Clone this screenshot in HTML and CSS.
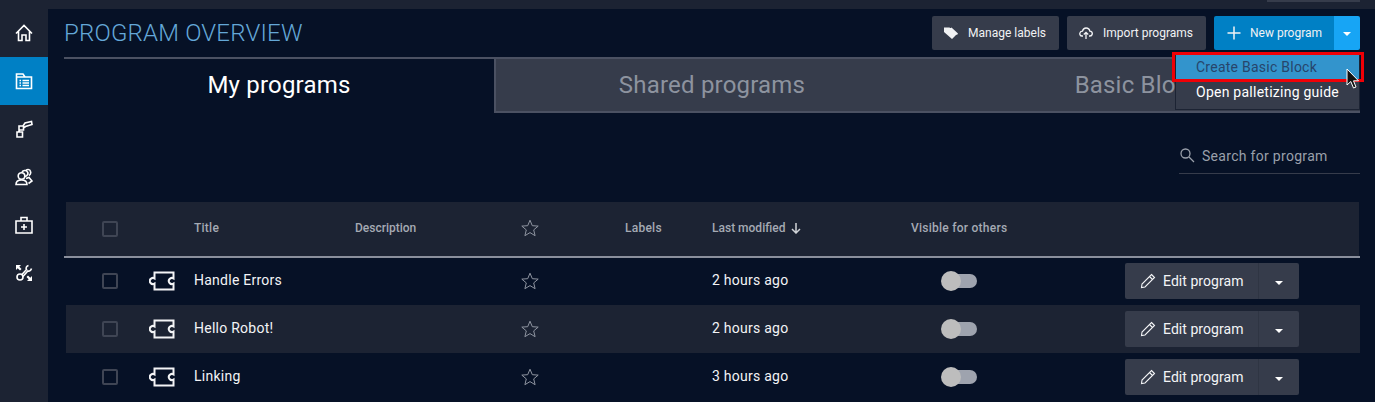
FILE: index.html
```html
<!DOCTYPE html>
<html lang="en">
<head>
<meta charset="utf-8">
<title>Program overview</title>
<link rel="stylesheet" href="styles.css">
</head>
<body>
<div class="topbar"><div class="topbar-tab"></div></div>
<div class="app">
  <nav class="sidebar">
    <a class="nav-item"><svg class="nav-icon" viewBox="0 0 18 18"><path d="M1 9.500 9 1.500 17 9.500M3.500 7.500V16.500H7V11H11V16.500H14.500V7.500"/></svg></a>
    <a class="nav-item active"><svg class="nav-icon" viewBox="0 0 18 18"><path d="M1.500 2H8L10 5H16.500V16.500H1.500ZM1.500 5H10M4.500 8.500H6M7.500 8.500H14M4.500 11H6M7.500 11H14M4.500 13.500H6M7.500 13.500H14"/></svg></a>
    <a class="nav-item"><svg class="nav-icon" viewBox="0 0 18 18"><path d="M2 12H7.500V17H2ZM3.500 12 5 9.500M4 6H8.500V10H4ZM8 6 10 3 16.500 1.500 17 4.500 10.500 6.500 8.500 8"/></svg></a>
    <a class="nav-item"><svg class="nav-icon" viewBox="0 0 18 18"><circle cx="6.500" cy="8" r="3.300"/><path d="M7 4.500C7.500 2.500 11 1.500 12.500 4 13.500 5.500 12.500 8 10 8.500M10.500 3C11.500 1 15 1 15.500 3.500 16 5 15.500 6.500 14 7.500M1 16.500C1 13.500 3.500 12 6.500 12S12 13.500 12 16.500ZM11 10.500 14 9.500 17 13 13.500 15.500"/></svg></a>
    <a class="nav-item"><svg class="nav-icon" viewBox="0 0 18 18"><path d="M1 5H17V17H1ZM6 5V1.500H12V5M9 8V14M6 11H12"/></svg></a>
    <a class="nav-item"><svg class="nav-icon" viewBox="0 0 18 18"><path d="M13.500 1.500C11.500 2 10.500 4 11.500 5.500L6.500 11M16.500 4.500C16 6.500 14.500 7.500 12.800 7L8 12.500"/><path class="solid" d="M1 1H6L4.300 2.700 6.500 5 5 6.500 2.700 4.300 1 6ZM17 17H12L13.700 15.300 11.500 13 13 11.500 15.300 13.700 17 12Z"/><circle cx="5" cy="13" r="3"/></svg></a>
  </nav>
  <main class="main">
    <header class="page-head">
      <h1 class="page-title">PROGRAM OVERVIEW</h1>
      <div class="actions">
        <button class="btn"><svg class="btn-icon" viewBox="0 0 14 14"><path class="solid" d="M0 1.500H5.500L13 8 8 13 0 6ZM7.500 1.500 14 7.500 13 9 6 2.500Z"/></svg>Manage labels</button>
        <button class="btn"><svg class="btn-icon" viewBox="0 0 14 14"><path d="M4 10H3C1 10 .5 8 1 6.800 1.500 5.500 2.500 5.200 3.500 5.200 4 3 5.500 2 7 2S10.500 3 10.800 5.200C12.500 5.200 13.500 6.500 13.300 8 13 9.500 12 10 11 10H10M7 13V6.500M4.800 8.500 7 6.300 9.200 8.500"/></svg>Import programs</button>
        <div class="split">
          <button class="btn primary"><svg class="plus" viewBox="0 0 14 14"><path d="M7 .5V13.500M.5 7H13.500"/></svg>New program</button>
          <button class="btn caret-btn"><span class="caret"></span></button>
        </div>
      </div>
    </header>
    <div class="menu">
      <div class="menu-item selected">Create Basic Block</div>
      <div class="menu-item">Open palletizing guide</div>
    </div>
    <div class="highlight"></div>
    <svg class="cursor" viewBox="0 0 14 24"><path d="M1 1V17L4.800 13.500 7.500 20 10 19 7.500 12.800H12.500Z"/></svg>

    <div class="tabs">
      <div class="tab current">My programs</div>
      <div class="tab">Shared programs</div>
      <div class="tab">Basic Blocks</div>
    </div>

    <div class="search-row">
      <label class="search">
        <svg class="search-icon" viewBox="0 0 16 16"><circle cx="6.500" cy="6.500" r="4.500"/><path d="M10 10 15 15"/></svg>
        <span>Search for program</span>
      </label>
    </div>

    <div class="table">
      <div class="row head">
        <div class="c-select"><span class="check"></span></div>
        <div>Title</div>
        <div class="tight">Description</div>
        <div class="star-cell"><svg class="star" viewBox="0 0 18 18"><path d="M9 1.200 11.300 6.700 17.200 7.100 12.700 10.900 14.100 16.700 9 13.600 3.900 16.700 5.300 10.900 .8 7.100 6.700 6.700Z"/></svg></div>
        <div>Labels</div>
        <div class="sorted tight">Last modified<svg class="arrow" viewBox="0 0 10 12"><path d="M5 1V10.500M1 7 5 11 9 7"/></svg></div>
        <div>Visible for others</div>
        <div></div>
      </div>

      <div class="row">
        <div class="c-select"><span class="check"></span><svg class="block" viewBox="0 0 26 20"><path d="M5.500 1.500H24.500V7.500A3 3 0 1 0 24.500 12.500V18.500H5.500V12.500A3 3 0 1 1 5.500 7.500Z"/></svg></div>
        <div class="cell-text">Handle Errors</div>
        <div></div>
        <div class="star-cell"><svg class="star" viewBox="0 0 18 18"><path d="M9 1.200 11.300 6.700 17.200 7.100 12.700 10.900 14.100 16.700 9 13.600 3.900 16.700 5.300 10.900 .8 7.100 6.700 6.700Z"/></svg></div>
        <div></div>
        <div class="cell-text">2 hours ago</div>
        <div><span class="toggle"><span class="knob"></span></span></div>
        <div class="edit"><button class="edit-btn"><svg class="pencil" viewBox="0 0 16 16"><path d="M11.500 1.500 14.500 4.500 5 14 1.500 14.500 2 11ZM9.500 3.500 12.500 6.500"/></svg>Edit program</button><button class="edit-more"><span class="caret"></span></button></div>
      </div>

      <div class="row alt">
        <div class="c-select"><span class="check"></span><svg class="block" viewBox="0 0 26 20"><path d="M5.500 1.500H24.500V7.500A3 3 0 1 0 24.500 12.500V18.500H5.500V12.500A3 3 0 1 1 5.500 7.500Z"/></svg></div>
        <div class="cell-text">Hello Robot!</div>
        <div></div>
        <div class="star-cell"><svg class="star" viewBox="0 0 18 18"><path d="M9 1.200 11.300 6.700 17.200 7.100 12.700 10.900 14.100 16.700 9 13.600 3.900 16.700 5.300 10.900 .8 7.100 6.700 6.700Z"/></svg></div>
        <div></div>
        <div class="cell-text">2 hours ago</div>
        <div><span class="toggle"><span class="knob"></span></span></div>
        <div class="edit"><button class="edit-btn"><svg class="pencil" viewBox="0 0 16 16"><path d="M11.500 1.500 14.500 4.500 5 14 1.500 14.500 2 11ZM9.500 3.500 12.500 6.500"/></svg>Edit program</button><button class="edit-more"><span class="caret"></span></button></div>
      </div>

      <div class="row">
        <div class="c-select"><span class="check"></span><svg class="block" viewBox="0 0 26 20"><path d="M5.500 1.500H24.500V7.500A3 3 0 1 0 24.500 12.500V18.500H5.500V12.500A3 3 0 1 1 5.500 7.500Z"/></svg></div>
        <div class="cell-text">Linking</div>
        <div></div>
        <div class="star-cell"><svg class="star" viewBox="0 0 18 18"><path d="M9 1.200 11.300 6.700 17.200 7.100 12.700 10.900 14.100 16.700 9 13.600 3.900 16.700 5.300 10.900 .8 7.100 6.700 6.700Z"/></svg></div>
        <div></div>
        <div class="cell-text">3 hours ago</div>
        <div><span class="toggle"><span class="knob"></span></span></div>
        <div class="edit"><button class="edit-btn"><svg class="pencil" viewBox="0 0 16 16"><path d="M11.500 1.500 14.500 4.500 5 14 1.500 14.500 2 11ZM9.500 3.500 12.500 6.500"/></svg>Edit program</button><button class="edit-more"><span class="caret"></span></button></div>
      </div>
    </div>
  </main>
</div>
</body>
</html>
```
FILE: styles.css
```css
* { box-sizing: border-box; }
html, body { margin: 0; height: 402px; overflow: hidden; }
body { background: #061126; color: #fff; font-family: Roboto, "Liberation Sans", sans-serif; font-size: 14px; }
svg { display: block; flex: none; fill: none; stroke: currentColor; }
.solid { fill: currentColor; stroke: none; }
button { font-family: inherit; border: 0; color: inherit; padding: 0; }

.topbar { height: 9px; background: #1c2333; display: flex; justify-content: flex-end; padding-right: 15px; }
.topbar-tab { width: 93px; height: 2px; background: #363c4b; }

.app { display: flex; height: 393px; }
.sidebar { width: 48px; background: #1c2333; flex: none; }
.nav-item { height: 48px; display: flex; align-items: center; justify-content: center; color: #fff; }
.nav-item.active { background: #0080c5; }
.nav-icon { width: 18px; height: 18px; stroke-width: 1.600; }

.main { flex: 1; padding: 7px 15px 0 16px; position: relative; min-width: 0; }
.page-head { display: flex; justify-content: space-between; align-items: center; height: 34px; }
.page-title { margin: 0; font-size: 24px; font-weight: 300; letter-spacing: .2px; color: #64a8d8; }
.actions { display: flex; gap: 8px; }

.btn { height: 34px; display: flex; align-items: center; background: #363c4b; border-radius: 2px; font-size: 12px; padding: 0 13px 0 12px; color: #f1f2f4; white-space: nowrap; }
.btn-icon { width: 14px; height: 14px; margin-right: 10px; stroke-width: 1.300; }
.split { display: flex; }
.primary { background: #0080c5; border-radius: 2px 0 0 2px; padding: 0 0 0 13px; width: 120px; }
.plus { width: 14px; height: 14px; stroke-width: 1.500; margin-right: 9px; }
.caret-btn { width: 26px; padding: 0; justify-content: center; background: #17a5f5; border-radius: 0 2px 2px 0; }
.caret { display: block; width: 0; height: 0; border-left: 4px solid transparent; border-right: 4px solid transparent; border-top: 4px solid #fff; margin-top: 2px; }

.menu { position: absolute; top: 43px; right: 15px; width: 185px; height: 58px; background: #363c4b; border: 1px solid #1c2333; padding-top: 1px; z-index: 3; font-size: 14px; letter-spacing: .25px; }
.menu-item { height: 25px; line-height: 25px; padding-left: 20px; white-space: nowrap; }
.menu-item.selected { height: 26px; line-height: 27px; background: #3394cc; color: #27456b; }
.highlight { position: absolute; top: 43px; right: 11px; width: 192px; height: 30px; border: 3px solid #f00006; z-index: 4; }
.cursor { position: absolute; top: 59px; left: 1298px; width: 14px; height: 24px; fill: #111; stroke: #fff; stroke-width: 1; z-index: 5; }

.tabs { display: grid; grid-template-columns: 432px 432px 432px; height: 56px; margin-top: 7px; border-top: 2px solid #4b5162; }
.tab { background: #363c4b; border-bottom: 2px solid #4b5162; color: #8d939f; font-size: 24px; letter-spacing: .2px; display: flex; align-items: center; justify-content: center; white-space: nowrap; }
.tab.current { background: #061126; color: #fff; border-bottom: 0; border-right: 2px solid #4b5162; padding-bottom: 2px; }

.search-row { display: flex; justify-content: flex-end; margin-top: 26px; }
.search { width: 181px; height: 35px; border-bottom: 1px solid #363c4b; display: flex; align-items: center; color: #9aa0ab; letter-spacing: .3px; }
.search-icon { width: 16px; height: 16px; stroke-width: 1.300; margin-right: 7px; margin-top: -2px; }

.table { margin-top: 28px; }
.row { display: grid; grid-template-columns: 130px 161px 166px 104px 87px 199px 214px 1fr; height: 48px; align-items: center; letter-spacing: .25px; color: #f3f4f6; }
.row.alt { background: #1c2333; margin-left: 2px; grid-template-columns: 128px 161px 166px 104px 87px 199px 214px 1fr; }
.row.alt .c-select { padding-left: 36px; }
.row.head { height: 55px; background: #1c2333; margin-left: 2px; margin-right: 1px; color: #a5aab4; font-size: 12px; font-weight: 500; grid-template-columns: 128px 161px 166px 104px 87px 199px 214px 1fr; position: relative; padding-bottom: 4px; }
.row.head::after { content: ""; position: absolute; left: -2px; right: -1px; bottom: -1px; height: 2px; background: #8a8f9c; }
.row.head .c-select { padding-left: 36px; }
.row.head .check { margin-top: 2px; }
.tight { letter-spacing: 0; }
.cell-text { margin-top: -2px; }
.c-select { display: flex; align-items: center; padding-left: 38px; }
.check { display: block; width: 16px; height: 16px; border: 2px solid #3f4554; border-radius: 2px; flex: none; }
.block { width: 26px; height: 20px; margin-left: 31px; stroke-width: 2; }
.star-cell { color: #8f95a1; }
.star { width: 18px; height: 18px; stroke-width: 1; }
.sorted { display: flex; align-items: center; white-space: nowrap; }
.arrow { width: 10px; height: 12px; margin-left: 6px; stroke-width: 1.500; color: #d0d3d8; }
.toggle { display: block; position: relative; width: 32px; height: 14px; margin-left: 34px; background: #9ea3ae; border-radius: 7px; }
.knob { position: absolute; left: -4px; top: -3px; width: 20px; height: 20px; border-radius: 50%; background: #bdbdbd; }
.edit { display: flex; height: 36px; }
.edit-btn { display: flex; align-items: center; width: 133px; height: 36px; background: #363c4b; border-radius: 2px 0 0 2px; padding-left: 15px; font-size: 14px; font-weight: 400; letter-spacing: .05px; color: #f3f4f6; white-space: nowrap; }
.pencil { width: 16px; height: 16px; margin-right: 7px; stroke-width: 1.100; }
.edit-more { width: 41px; height: 36px; background: #363c4b; border-left: 1px solid #2f3543; border-radius: 0 2px 2px 0; display: flex; align-items: center; justify-content: center; }
.edit-more .caret { margin-top: 4px; }
```
